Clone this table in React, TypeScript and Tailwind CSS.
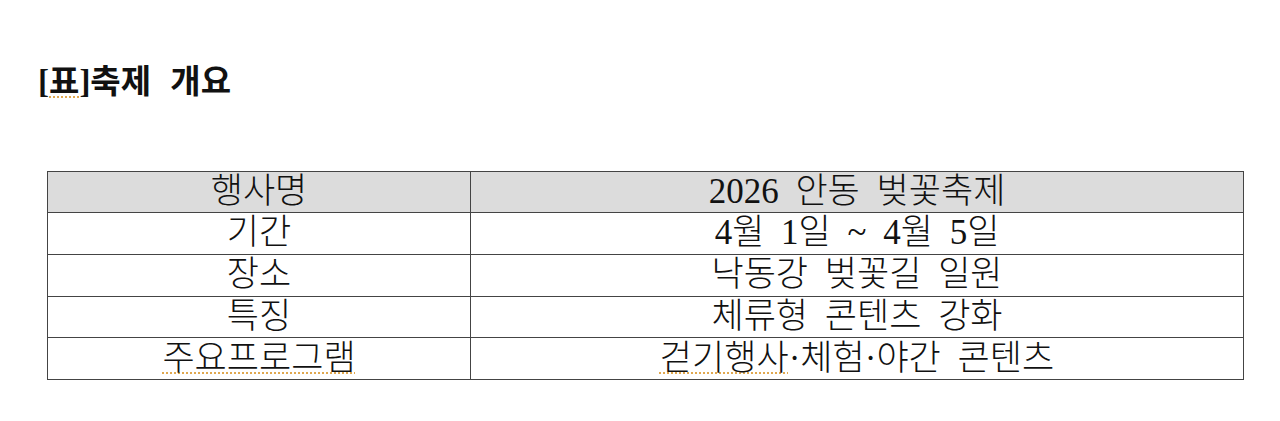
import React from "react";

const rows: { label: string; value: React.ReactNode; wide?: boolean }[] = [
  { label: "기간", value: "4월 1일 ~ 4월 5일" },
  { label: "장소", value: "낙동강 벚꽃길 일원" },
  { label: "특징", value: "체류형 콘텐츠 강화" },
  {
    label: "주요프로그램",
    wide: true,
    value: (
      <>
        <span className="underline decoration-dotted decoration-[1.5px] decoration-[#e0a850] underline-offset-[3px]">
          걷기행사
        </span>
        ·체험·야간 콘텐츠
      </>
    ),
  },
];

const App = () => {
  return (
    <main
      className="w-[1280px] h-[421px] bg-white text-[#111] pt-[62px]"
      style={{ fontFamily: '"Liberation Serif", "Noto Sans CJK KR", serif' }}
    >
      {/* 제목 */}
      <h1 className="pl-[38px] text-[33px] leading-[40px] font-bold [word-spacing:11px]">
        [
        <span className="underline decoration-dotted decoration-[1.5px] decoration-[#e0a850] underline-offset-[3px]">
          표
        </span>
        ]축제 개요
      </h1>

      {/* 표 */}
      <table className="ml-[47px] mt-[69px] w-[1197px] border-collapse table-fixed text-[35px] leading-[38px] font-light [word-spacing:8px]">
        <colgroup>
          <col className="w-[423px]" />
          <col />
        </colgroup>
        <thead>
          <tr className="bg-[#dcdcdc]">
            <th className="border border-[#444] font-light h-[41px] p-0">행사명</th>
            <th className="border border-[#444] font-light h-[41px] p-0">2026 안동 벚꽃축제</th>
          </tr>
        </thead>
        <tbody>
          {rows.map((r) => (
            <tr key={r.label}>
              <td className="border border-[#444] text-center h-[41.75px] p-0">
                {r.wide ? (
                  <span className="underline decoration-dotted decoration-[1.5px] decoration-[#e0a850] underline-offset-[3px]">
                    {r.label}
                  </span>
                ) : (
                  r.label
                )}
              </td>
              <td className="border border-[#444] text-center h-[41.75px] p-0">{r.value}</td>
            </tr>
          ))}
        </tbody>
      </table>
    </main>
  );
};

export default App;
